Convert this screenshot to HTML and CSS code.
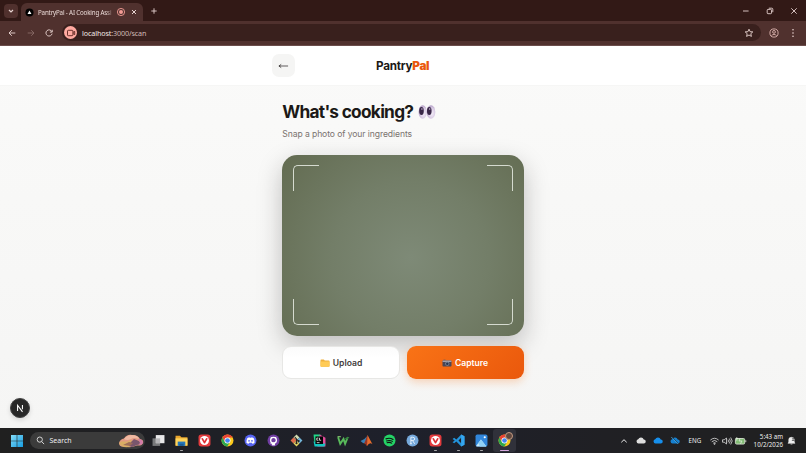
FILE: index.html
```html
<!DOCTYPE html>
<html lang="en">
<head>
<meta charset="utf-8">
<title>PantryPal - AI Cooking Assistant</title>
<link rel="stylesheet" href="styles.css">
</head>
<body>
<svg class="defs" aria-hidden="true">
  <defs>
    <symbol id="chrome" viewBox="0 0 24 24">
      <circle cx="12" cy="12" r="11" fill="#fbc91c"/>
      <path d="M2.5 6.5A11 11 0 0 1 21.6 6.5H12L7.2 14.8Z" fill="#e94335"/>
      <path d="M2.5 6.5A11 11 0 0 0 11.5 23L16.8 14.8 12 17.5 7.2 14.8Z" fill="#2da94f"/>
      <circle cx="12" cy="12" r="5.6" fill="#fff"/><circle cx="12" cy="12" r="4.3" fill="#4285f4"/>
    </symbol>
    <symbol id="vivaldi" viewBox="0 0 24 24">
      <rect x="1" y="1" width="22" height="22" rx="5" fill="#e33b3d"/>
      <circle cx="12" cy="12" r="8.3" fill="#fff"/>
      <path d="M8 9l4 7 4-7" fill="none" stroke="#df3035" stroke-width="3.2" stroke-linecap="round" stroke-linejoin="round"/>
    </symbol>
    <symbol id="cloud" viewBox="0 0 20 14">
      <path d="M5 13a4.2 4.2 0 0 1-.6-8.3A6 6 0 0 1 15.5 5 4 4 0 0 1 15.5 13Z"/>
    </symbol>
  </defs>
</svg>
<div class="screen">
  <header class="tabs">
    <button class="tab-search"><svg viewBox="0 0 10 10"><path d="M3 4l2 2 2-2"/></svg></button>
    <div class="tab">
      <svg class="favicon" viewBox="0 0 10 10"><circle cx="5" cy="5" r="4.5" fill="#000"/><path d="M5 2.9 7.2 6.7H2.8Z" fill="#fff"/></svg>
      <span class="tab-title">PantryPal - AI Cooking Assi</span>
      <svg class="rec" viewBox="0 0 10 10"><circle cx="5" cy="5" r="3.6"/><circle class="dot" cx="5" cy="5" r="2"/></svg>
      <svg class="tab-close" viewBox="0 0 10 10"><path d="M3 3l4 4M7 3L3 7"/></svg>
    </div>
    <svg class="new-tab" viewBox="0 0 10 10"><path d="M5 2.300v5.400M2.300 5h5.400"/></svg>
    <div class="window-controls">
      <svg viewBox="0 0 10 10"><path d="M2 5h5.600"/></svg>
      <svg viewBox="0 0 10 10"><rect x="2.200" y="3.400" width="4.300" height="4.300" rx=".8"/><path d="M3.800 2.200h3a1 1 0 0 1 1 1v3"/></svg>
      <svg viewBox="0 0 10 10"><path d="M2.300 2.300l5.400 5.400M7.700 2.300L2.300 7.700"/></svg>
    </div>
  </header>
  <div class="toolbar">
    <div class="nav">
      <svg viewBox="0 0 12 12"><path d="M9.300 6H3M5.800 3.200L3 6l2.800 2.800"/></svg>
      <svg class="dim" viewBox="0 0 12 12"><path d="M2.700 6H9M6.200 3.200L9 6 6.200 8.800"/></svg>
      <svg viewBox="0 0 12 12"><path d="M8.900 4.700A3.100 3.100 0 1 0 9.100 6.600M9.200 2.800v2.300H6.900"/></svg>
    </div>
    <div class="address">
      <span class="cam"><svg viewBox="0 0 12 12"><rect x="2.500" y="3.300" width="5.400" height="5.400" rx=".8"/><path d="M8 5.400l1.700-1v3.200L8 6.600"/></svg></span>
      <span class="url">localhost<i>:3000/scan</i></span>
      <svg class="star" viewBox="0 0 12 12"><path d="M6 2.200l1.100 2.500 2.700.2-2 1.800.6 2.700L6 8 3.600 9.400l.6-2.700-2-1.800 2.700-.2Z"/></svg>
    </div>
    <svg class="profile" viewBox="0 0 12 12"><circle cx="6" cy="6" r="4.100"/><circle cx="6" cy="4.900" r="1.400"/><path d="M3.400 8.800c1.200-1.800 4-1.800 5.200 0"/></svg>
    <svg class="more" viewBox="0 0 12 12"><circle cx="6" cy="2.800" r=".8"/><circle cx="6" cy="6" r=".8"/><circle cx="6" cy="9.200" r=".8"/></svg>
  </div>

  <div class="app">
    <div class="app-header">
      <button class="back"><svg viewBox="0 0 12 8"><path d="M11 4H1M3.500 2.200L1 4l2.500 1.800"/></svg></button>
      <div class="brand">Pantry<b>Pal</b></div>
    </div>
    <main class="content">
      <h1><span>What's cooking?</span>
        <svg class="eyes" viewBox="0 0 18 16">
          <defs><radialGradient id="eye" cx=".6" cy=".6" r=".65"><stop offset="0" stop-color="#f4eef8"/><stop offset=".6" stop-color="#d9cbe4"/><stop offset="1" stop-color="#ab95bf"/></radialGradient></defs>
          <ellipse cx="4.700" cy="8" rx="4.100" ry="6.700" fill="url(#eye)"/><ellipse cx="13" cy="8" rx="4.300" ry="6.700" fill="url(#eye)"/>
          <ellipse cx="3.500" cy="7" rx="2.300" ry="4" fill="#392747"/><ellipse cx="11.300" cy="7" rx="2.300" ry="4" fill="#392747"/>
          <circle cx="3.900" cy="5" r=".8" fill="#cbbbd8"/><circle cx="11.700" cy="5" r=".8" fill="#cbbbd8"/>
        </svg>
      </h1>
      <p>Snap a photo of your ingredients</p>
      <div class="viewfinder">
        <i class="corner tl"></i><i class="corner tr"></i><i class="corner bl"></i><i class="corner br"></i>
      </div>
      <div class="actions">
        <button class="upload">
          <svg viewBox="0 0 10 10"><path d="M.5 2.200q0-.8.800-.8h2.500l1 1h3.900q.8 0 .8.800v4.800q0 .8-.8.800H1.300q-.8 0-.8-.8Z" fill="#eeb03c"/><path d="M.5 3.600h9V8q0 .8-.8.800H1.300Q.5 8.800.5 8Z" fill="#ffcb56"/></svg>
          <span>Upload</span>
        </button>
        <button class="capture">
          <svg viewBox="0 0 10 10"><path d="M1.500 1.700h2v1h-2z" fill="#555963"/><rect x=".5" y="2.500" width="9" height="6" rx=".8" fill="#4a4655"/><path d="M.5 3.300q0-.8.800-.8h7.400q.8 0 .8.800v.7h-9z" fill="#a5a1aa"/><circle cx="5.300" cy="5.700" r="2.100" fill="#81899a"/><circle cx="5.300" cy="5.700" r="1.300" fill="#29344c"/></svg>
          <span>Capture</span>
        </button>
      </div>
    </main>
    <div class="dev-badge"><svg viewBox="0 0 20 20"><path d="M7.300 13.200V7l5.500 7.300M12.700 6.800v4.600"/></svg></div>
  </div>

  <footer class="taskbar">
    <svg class="start" viewBox="0 0 14 14"><defs><linearGradient id="win" x2="1" y2="1"><stop stop-color="#83dcf8"/><stop offset="1" stop-color="#169bdf"/></linearGradient></defs><path fill="url(#win)" d="M1 1h5.700v5.700H1zM7.300 1H13v5.700H7.300zM1 7.300h5.700V13H1zM7.300 7.300H13V13H7.300z"/></svg>
    <div class="search">
      <svg class="glass" viewBox="0 0 10 10"><circle cx="4.200" cy="4" r="2.900"/><path d="M6.300 6.200L9 9"/></svg>
      <span>Search</span>
      <svg class="art" viewBox="0 0 26 14"><path d="M1 9Q2 5 6 4.500 9 0 14 1q6 0 8 4 4 1 3 4-1 3-6 2.500-7 3-12 1-6 1-6-3.500Z" fill="#e39a82"/><path d="M6 5q3-4 8-4 6 0 7 4-5-2-8 0-4 2-7 0Z" fill="#efb9a2"/><path d="M1 9q3-3 7-1l5-2 3 3-5 4q-8 1-10-4Z" fill="#d9ad65"/><path d="M13 8l3-3 5 2 2 3-4 1-5 2-3-1Z" fill="#79566c"/><path d="M20 5q5 0 5 4-1 2-4 2l1-3Z" fill="#d17ba8"/><path d="M5 11l6-3 4 1-3 3Z" fill="#9e6d59"/></svg>
    </div>
    <div class="apps">
      <span><svg viewBox="0 0 24 24"><rect x="1" y="8" width="14" height="14" fill="#77787a"/><rect x="7" y="2" width="16" height="15" fill="#e8e8e9"/><path d="M7 8h8v9H7z" fill="#b5b5b7"/></svg></span>
      <span class="running"><svg viewBox="0 0 24 24"><path d="M1 3h8l3 3h11v16H1z" fill="#e8a42d"/><path d="M1 8h22v13H1z" fill="#ffd45b"/><path d="M5 14h14v8H5z" fill="#2678b9"/><path d="M8 18h8v4H8z" fill="#1b5c96"/></svg></span>
      <span><svg><use href="#vivaldi"/></svg></span>
      <span><svg><use href="#chrome"/></svg></span>
      <span><svg viewBox="0 0 24 24"><circle cx="12" cy="12" r="11" fill="#5865f2"/><path d="M6 8q3-2 4-2l.5 1h3l.5-1q3 .5 4 2 2 4 1.500 8-2 1.500-4 2l-1-2h-5l-1 2q-2-.5-4-2Q4 12 6 8Z" fill="#fff"/><circle cx="9.300" cy="12.500" r="1.600" fill="#5865f2"/><circle cx="14.700" cy="12.500" r="1.600" fill="#5865f2"/></svg></span>
      <span><svg viewBox="0 0 24 24"><circle cx="12" cy="12" r="11" fill="#703da2"/><circle cx="12" cy="11.500" r="5.300" stroke="#fff" stroke-width="2.400"/><path d="M7 9V5.200L10.500 7ZM17 9V5.200L13.500 7Z" fill="#fff"/><path d="M9.300 15.500h5.400V21H9.300Z" fill="#fff"/><path d="M9.500 18q-2.500.5-3.500-1.500" stroke="#fff" stroke-width="1.300"/></svg></span>
      <span><svg viewBox="0 0 24 24"><path d="M12 1l5.500 5.500L12 12 6.500 6.500Z" fill="#d3ddb2"/><path d="M6.500 6.500L12 12l-5.500 5.500L1 12Z" fill="#df6d4c"/><path d="M17.500 6.500L23 12l-5.500 5.500L12 12Z" fill="#75b6da"/><path d="M12 12l5.500 5.500L12 23l-5.500-5.500Z" fill="#e5d764"/><path d="M9 6l3 3v9M12 10l4 3" stroke="#292323" stroke-width="2" fill="none"/><circle cx="12" cy="17" r="2" fill="#292323"/><circle cx="16" cy="13" r="2" fill="#292323"/></svg></span>
      <span><svg viewBox="0 0 24 24"><path d="M1 1h13l-3 15-8 2Z" fill="#21d789"/><path d="M12 1l11 6v16H8l4-9Z" fill="#e34b9b"/><path d="M1 14l14 3 8 1-2 5H3Z" fill="#12c7c1"/><rect x="4.500" y="4.500" width="14" height="14" fill="#050505"/><path d="M10 7.500H7v4h3M12 7v4.500h3M7 16h5" stroke="#fff" stroke-width="1.400" fill="none"/></svg></span>
      <span><svg viewBox="0 0 24 24"><path d="M2 6l4 12 6-9 3 9 4-10" fill="none" stroke="#59ba5b" stroke-width="3.500"/><path d="M14 9l5-4 4 1-4 4Z" fill="#35873f"/><path d="M1 5h6" stroke="#8bd174" stroke-width="2"/></svg></span>
      <span><svg viewBox="0 0 24 24"><path d="M1 13l7-4 5-5-3 12-4 1Z" fill="#367fb5"/><path d="M14 2q3 6 9 17-5-5-10 3-2-4-5-5 4-5 6-15Z" fill="#e76d2d"/><path d="M14 2l-1 20q-2-4-5-5Z" fill="#963528"/></svg></span>
      <span><svg viewBox="0 0 24 24"><circle cx="12" cy="12" r="11" fill="#24d366"/><path d="M5.500 9q7-2.500 13 1M6.500 12.800q6-1.800 11 .8M7.500 16q5-1.300 8.500 .8" stroke="#111" stroke-width="2" fill="none" stroke-linecap="round"/></svg></span>
      <span><svg viewBox="0 0 24 24"><circle cx="12" cy="12" r="11" fill="#76a9db"/><path d="M9 18V6h3.500q3.500 0 3.500 3t-3.500 3H9M12 12l4 6M7 18h4" stroke="#edf5fd" stroke-width="1.700" fill="none"/></svg></span>
      <span class="running"><svg><use href="#vivaldi"/></svg></span>
      <span class="running"><svg viewBox="0 0 24 24"><path d="M17 1l6 3v16l-6 3L8 14l-4 3-3-2 4-3-4-3 3-2 4 3Zm0 6l-5 5 5 5Z" fill="#2292d9" fill-rule="evenodd"/><path d="M17 1l6 3v16l-6 3Z" fill="#36a6ef"/></svg></span>
      <span class="running"><svg viewBox="0 0 24 24"><rect x="1" y="1" width="22" height="22" rx="3" fill="#3186db"/><path d="M2 22l9-12 10 13H3Z" fill="#c7eafc"/><path d="M11 10l10 13H9l-3-6Z" fill="#8fd0f6"/><circle cx="18" cy="6" r="2" fill="#fff"/></svg></span>
      <span class="running active"><svg><use href="#chrome"/></svg><i class="avatar"></i></span>
    </div>
    <div class="tray">
      <svg class="chev" viewBox="0 0 10 10"><path d="M2.300 6.300L5 3.700l2.700 2.600"/></svg>
      <svg class="cloud grey"><use href="#cloud"/></svg>
      <svg class="cloud blue"><use href="#cloud"/></svg>
      <svg class="cloud off" viewBox="0 0 20 14"><use href="#cloud"/><path d="M4 0l14 14" stroke="#202022" stroke-width="1.500"/><path d="M2.500 0l14 14" stroke="#4bb2f0" stroke-width="1.500"/></svg>
      <span class="lang">ENG</span>
      <svg class="wifi" viewBox="0 0 12 10"><path d="M1.500 4q4.500-4 9 0M3 5.800q3-2.800 6 0M4.600 7.400q1.400-1.200 2.800 0"/><circle cx="6" cy="8.300" r=".5"/></svg>
      <svg class="sound" viewBox="0 0 12 10"><path d="M1.500 3.800h1.700L5.500 2v6L3.200 6.200H1.500ZM7 3.600q1 1.400 0 2.800M8.300 2.500q2 2.500 0 5M9.700 1.500q3 3.500 0 7"/></svg>
      <svg class="battery" viewBox="0 0 14 10"><rect x="1.500" y="2.300" width="10" height="6" rx="1.300" fill="#83bd76" stroke="#d2dccb"/><path d="M12.700 4.200v2" stroke="#d2dccb"/><path d="M3 .8v4M1.500 2.500h3M6.500 2l-1 3h3L7 8" stroke="#e3f1df" stroke-width=".8" fill="none"/></svg>
      <div class="clock"><span>5:43 am</span><span>10/2/2026</span></div>
      <svg class="bell" viewBox="0 0 10 10"><path d="M2 7V4q0-2.500 3-2.500T8 4v3l1 1H1Z"/><path d="M4 9h2"/><path class="zz" d="M5.500 2.500h2.500L5.800 5h2.500"/></svg>
    </div>
  </footer>
</div>
</body>
</html>
```
FILE: styles.css
```css
* { box-sizing: border-box; }
body { margin: 0; overflow: hidden; font-family: "Noto Sans", "Liberation Sans", sans-serif; }
button { padding: 0; border: 0; font: inherit; }
svg { display: block; flex: none; fill: none; }
.defs { position: absolute; width: 0; height: 0; }
.screen { width: 806px; height: 453px; display: flex; flex-direction: column; background: #f8f8f6; }

.tabs { height: 21px; flex: none; display: flex; align-items: center; padding-left: 4px; background: #321916; color: #eadad7; }
.tabs svg { width: 10px; height: 10px; stroke: #e6d3d0; stroke-width: .9; }
.tab-search { width: 14px; height: 14px; display: grid; place-items: center; border-radius: 4px; background: #50302d; }
.tab-search svg { stroke-width: 1.2; }
.tab { width: 122px; height: 18px; align-self: flex-end; margin-left: 3px; padding: 0 4px; display: flex; align-items: center; border-radius: 6px 6px 0 0; background: #50312e; }
.tabs .favicon { width: 9px; height: 9px; stroke: none; }
.tab-title { width: 77px; margin-left: 4px; overflow: hidden; white-space: nowrap; font-size: 6.2px; letter-spacing: -.16px; mask-image: linear-gradient(90deg, #000 90%, transparent); }
.tabs .rec { stroke: #f29b94; margin-left: 2px; }
.rec .dot { fill: #f29b94; stroke: none; }
.tabs .tab-close { margin-left: 3px; stroke-width: 1; }
.tabs .new-tab { margin-left: 5.500px; }
.window-controls { margin-left: auto; padding-right: 7px; display: flex; gap: 14px; }

.toolbar { height: 24.5px; flex: none; display: flex; align-items: center; padding: 0 5px 0 6px; background: #50312e; border-bottom: 1px solid #6b4d4b; }
.toolbar svg { width: 12px; height: 12px; stroke: #ead6d3; stroke-width: .9; }
.nav { display: flex; gap: 6.5px; }
.toolbar .dim { stroke: #886b68; }
.address { width: 699px; height: 17px; margin-left: 7px; display: flex; align-items: center; padding: 0 6px 0 2px; border-radius: 9px; background: #39201d; }
.cam { width: 13px; height: 13px; display: grid; place-items: center; border-radius: 50%; background: #ffaaa1; }
.toolbar .cam svg { stroke: #59231d; }
.url { margin-left: 5px; color: #f3e7e5; font-size: 7.2px; line-height: 10px; letter-spacing: -.13px; }
.url i { color: #d1b9b6; font-style: normal; }
.toolbar .star { margin-left: auto; }
.toolbar .profile { margin-left: 7px; stroke: #dcb4af; }
.toolbar .more { margin-left: 7px; fill: #ead6d3; stroke: none; }

.app { position: relative; flex: 1; min-height: 0; background: linear-gradient(#fafaf9, #f5f5f4); font-family: "Inter", "Open Sans", sans-serif; }
.app-header { height: 40px; display: grid; grid-template-columns: 1fr 54px 1fr; align-items: center; background: #fff; border-bottom: 1px solid #f6f6f5; }
.back { width: 23px; height: 23px; margin-left: 272px; display: grid; place-items: center; border-radius: 7px; background: #f5f5f4; }
.back svg { width: 11px; height: 8px; margin-top: 2px; stroke: #292524; stroke-width: .8; }
.brand { padding-top: 2px; color: #1c1917; font-size: 11.7px; line-height: 16px; font-weight: 700; letter-spacing: -.25px; white-space: nowrap; }
.brand b { color: #ea580c; }
.content { width: 241.5px; margin: 0 auto; padding-top: 15px; }
h1 { height: 22px; margin: 0; display: flex; align-items: center; gap: 4.5px; color: #1c1917; font-size: 17.3px; font-weight: 700; letter-spacing: -.73px; white-space: nowrap; }
.eyes { width: 18px; height: 16px; }
p { height: 14px; margin: 4px 0 14px; color: #79736f; font-size: 8.6px; line-height: 14px; letter-spacing: -.09px; white-space: nowrap; }
.viewfinder { height: 181px; padding: 10.5px; display: grid; grid-template-columns: 26px 26px; grid-template-rows: 26px 26px; place-content: space-between; border-radius: 15px; background: radial-gradient(ellipse 65% 85% at 53% 57%, #7e8a77 0, #737e68 50%, #646d53 100%); box-shadow: 0 9px 24px rgba(28,25,23,.25); }
.corner { border: 0 solid #d5dacf; }
.tl { border-width: 1.5px 0 0 1.5px; border-top-left-radius: 5px; }
.tr { border-width: 1.5px 1.5px 0 0; border-top-right-radius: 5px; }
.bl { border-width: 0 0 1.5px 1.5px; border-bottom-left-radius: 5px; }
.br { border-width: 0 1.5px 1.5px 0; border-bottom-right-radius: 5px; }
.actions { margin-top: 10.5px; display: grid; grid-template-columns: 118px 117px; gap: 6.5px; }
.actions button { height: 33px; display: flex; align-items: center; justify-content: center; gap: 2.5px; border-radius: 9px; font-size: 8.6px; font-weight: 600; }
.actions svg { width: 10px; height: 10px; }
.actions .upload { border: 1px solid #e7e7e5; background: linear-gradient(#fbfbfb, #fff 35%); color: #44403c; }
.actions .capture { background: linear-gradient(135deg, #f97316, #ea580c); color: #fff; box-shadow: 0 3px 9px rgba(249,115,22,.28); }
.dev-badge { position: absolute; left: 10px; bottom: 10px; width: 20px; height: 20px; border-radius: 50%; background: #282828; border: 1px solid #444; box-shadow: 0 2px 5px #0002; }
.dev-badge svg { width: 18px; height: 18px; stroke: #fff; stroke-width: 1.2; }

.taskbar { height: 25px; flex: none; display: flex; align-items: center; background: linear-gradient(90deg, #202020, #1e202b 50%, #202024 75%, #202020); color: #eee; }
.start { width: 14px; height: 14px; margin-left: 10px; }
.search { width: 115px; height: 17px; margin-left: 6px; padding: 0 1px 0 6px; display: flex; align-items: center; border-radius: 9px; background: #3b3b3b; font-size: 7px; }
.glass { width: 9px; height: 9px; margin-right: 4.5px; stroke: #e2e2e2; }
.art { width: 26px; height: 14px; margin-left: auto; }
.apps { display: flex; margin-left: 2px; }
.apps span { position: relative; width: 23.07px; height: 23px; display: grid; place-items: center; }
.apps svg { width: 13px; height: 13px; }
.running::after { content: ""; position: absolute; left: 10px; bottom: 1px; width: 3px; height: 1.5px; border-radius: 1px; background: #a5a5a8; }
.active { border-radius: 3px; background: #30313a; }
.active::after { left: 7px; width: 9px; background: #d6a8df; }
.apps .avatar { position: absolute; right: 3px; top: 3px; width: 8px; height: 8px; border-radius: 50%; border: 1px solid #c29a83; background: #60483f; }
.tray { margin-left: auto; padding-right: 10px; display: flex; align-items: center; }
.chev { width: 10px; height: 10px; stroke: #eee; margin-right: 6.5px; }
.cloud { width: 10px; height: 7px; margin-right: 7px; }
.grey { fill: #dedede; }
.blue { fill: #168fec; }
.off { fill: #1680d0; }
.lang { width: 14px; margin-left: 2px; font-size: 6.2px; }
.wifi { width: 11px; height: 10px; margin-left: 6.5px; stroke: #ddd; stroke-width: .9; }
.sound { width: 12px; height: 10px; margin-left: 1px; stroke: #ddd; stroke-width: .8; }
.battery { width: 13px; height: 10px; margin-left: 1px; }
.clock { width: 36px; display: flex; flex-direction: column; align-items: flex-end; font-size: 6.2px; line-height: 8px; white-space: nowrap; }
.bell { width: 9px; height: 9px; margin-left: 4px; fill: #eee; stroke: #eee; stroke-width: .7; }
.bell .zz { stroke: #222; fill: none; }
```
